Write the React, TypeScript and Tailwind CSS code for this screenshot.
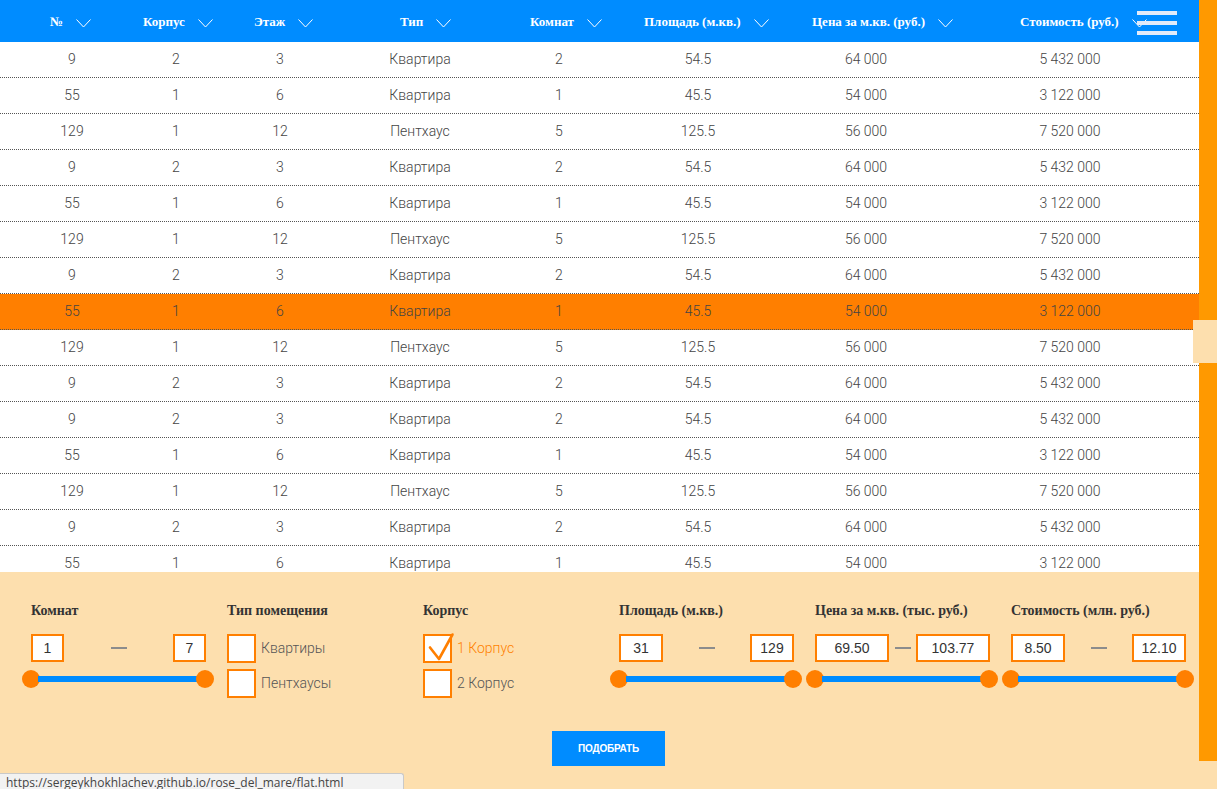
import React from "react";

type Flat = {
  num: number;
  building: number;
  floor: number;
  type: string;
  rooms: number;
  area: string;
  price: string;
  cost: string;
};

const flatA: Flat = { num: 9, building: 2, floor: 3, type: "Квартира", rooms: 2, area: "54.5", price: "64 000", cost: "5 432 000" };
const flatB: Flat = { num: 55, building: 1, floor: 6, type: "Квартира", rooms: 1, area: "45.5", price: "54 000", cost: "3 122 000" };
const flatC: Flat = { num: 129, building: 1, floor: 12, type: "Пентхаус", rooms: 5, area: "125.5", price: "56 000", cost: "7 520 000" };

const flats: Flat[] = [
  flatA, flatB, flatC, flatA, flatB, flatC, flatA, flatB,
  flatC, flatA, flatA, flatB, flatC, flatA, flatB,
];

const ACTIVE_ROW = 7;

const headers = [
  "№",
  "Корпус",
  "Этаж",
  "Тип",
  "Комнат",
  "Площадь (м.кв.)",
  "Цена за м.кв. (руб.)",
  "Стоимость (руб.)",
];

const Chevron = () => (
  <svg width="15" height="9" viewBox="0 0 15 9" className="translate-y-[2px]">
    <polyline points="0.5,0.5 7.5,8 14.5,0.5" fill="none" stroke="#ffffff" strokeWidth="1" />
  </svg>
);

const NumInput = ({ value, width }: { value: string; width: string }) => (
  <div
    className={`${width} h-[28px] border-2 border-[#ff7f00] bg-white flex items-center justify-center font-['Liberation_Sans',Arial,sans-serif] text-[14px] text-[#333]`}
  >
    {value}
  </div>
);

const RangeFilter = ({
  title,
  from,
  to,
  inputWidth,
}: {
  title: string;
  from: string;
  to: string;
  inputWidth: string;
}) => (
  <div className="w-[196px] flex flex-col">
    <div className="pl-[9px] h-[16px] leading-[16px] font-['Liberation_Serif',serif] font-bold text-[14px] text-[#333] whitespace-nowrap">
      {title}
    </div>
    <div className="mt-[15px] ml-[9px] w-[175px] flex items-center justify-between">
      <NumInput value={from} width={inputWidth} />
      <span className="w-[16px] h-[2px] bg-[#8c8c8c]" />
      <NumInput value={to} width={inputWidth} />
    </div>
    {/* Slider */}
    <div className="mt-[8px] w-[192px] h-[18px] flex items-center">
      <span className="w-[18px] h-[18px] rounded-full bg-[#ff7f00] shrink-0" />
      <span className="flex-1 h-[6px] bg-[#008cff] -mx-[2px]" />
      <span className="w-[18px] h-[18px] rounded-full bg-[#ff7f00] shrink-0 relative" />
    </div>
  </div>
);

const CheckFilter = ({
  title,
  options,
}: {
  title: string;
  options: { label: string; checked?: boolean }[];
}) => (
  <div className="w-[196px] flex flex-col pl-[9px]">
    <div className="h-[16px] leading-[16px] font-['Liberation_Serif',serif] font-bold text-[14px] text-[#333] whitespace-nowrap">
      {title}
    </div>
    <div className="mt-[15px] flex flex-col gap-[6px]">
      {options.map((o) => (
        <div key={o.label} className="flex items-center gap-[5px]">
          <div className="relative w-[29px] h-[29px] border-2 border-[#ff7f00] bg-white">
            {o.checked && (
              <svg
                width="32"
                height="32"
                viewBox="0 0 32 32"
                className="absolute -left-[2px] -top-[3px] overflow-visible"
              >
                <polyline
                  points="7,14.5 16,26 29.5,1.5"
                  fill="none"
                  stroke="#ff7f00"
                  strokeWidth="2.6"
                  strokeLinecap="round"
                  strokeLinejoin="round"
                />
              </svg>
            )}
          </div>
          <span
            className={`font-['Roboto',sans-serif] font-light text-[14px] ${
              o.checked ? "text-[#ff7f00]" : "text-[#555]"
            }`}
          >
            {o.label}
          </span>
        </div>
      ))}
    </div>
  </div>
);

export default function App() {
  return (
    <div className="relative w-[1217px] h-[789px] overflow-hidden bg-white flex flex-col">
      {/* Table header */}
      <div className="h-[42px] shrink-0 bg-[#008cff] grid grid-cols-[93px_111px_146px_130px_114px_168px_208px_1fr] pl-[50px] items-center">
        {headers.map((h) => (
          <div key={h} className="flex items-center gap-[13px]">
            <span className="font-['Liberation_Serif',serif] font-bold text-[13px] leading-none text-white whitespace-nowrap">
              {h}
            </span>
            <Chevron />
          </div>
        ))}
      </div>

      {/* Table body */}
      <div className="h-[530px] shrink-0 overflow-hidden">
        {flats.map((f, i) => (
          <div
            key={i}
            className={`h-[36px] grid grid-cols-[144px_64px_144px_136px_142px_136px_200px_208px_1fr] items-center text-center border-b border-dotted border-[#555] font-['Roboto',sans-serif] font-light text-[14px] text-[#444] ${
              i === ACTIVE_ROW ? "bg-[#ff7f00]" : "bg-white"
            }`}
          >
            <span>{f.num}</span>
            <span>{f.building}</span>
            <span>{f.floor}</span>
            <span>{f.type}</span>
            <span>{f.rooms}</span>
            <span>{f.area}</span>
            <span>{f.price}</span>
            <span>{f.cost}</span>
            <span />
          </div>
        ))}
      </div>

      {/* Filters */}
      <div className="flex-1 bg-[#fddfae] flex flex-col">
        <div className="flex pl-[22px] pt-[31px]">
          <RangeFilter title="Комнат" from="1" to="7" inputWidth="w-[33px]" />
          <CheckFilter
            title="Тип помещения"
            options={[{ label: "Квартиры" }, { label: "Пентхаусы" }]}
          />
          <CheckFilter
            title="Корпус"
            options={[{ label: "1 Корпус", checked: true }, { label: "2 Корпус" }]}
          />
          <RangeFilter title="Площадь (м.кв.)" from="31" to="129" inputWidth="w-[44px]" />
          <RangeFilter title="Цена за м.кв. (тыс. руб.)" from="69.50" to="103.77" inputWidth="w-[74px]" />
          <RangeFilter title="Стоимость (млн. руб.)" from="8.50" to="12.10" inputWidth="w-[54px]" />
        </div>
        <div className="flex justify-center mt-[33px]">
          <button className="w-[113px] h-[35px] bg-[#008cff] text-white font-['Liberation_Sans',Arial,sans-serif] font-bold text-[10px] tracking-[-0.2px]">
            ПОДОБРАТЬ
          </button>
        </div>
      </div>

      {/* Menu button */}
      <div className="absolute left-[1137px] top-[11px] w-[40px] flex flex-col gap-[6px]">
        <span className="h-[4px] bg-[#e3ebf9]" />
        <span className="h-[4px] bg-[#e3ebf9]" />
        <span className="h-[4px] bg-[#e3ebf9]" />
      </div>

      {/* Scrollbar */}
      <div className="absolute right-0 top-0 w-[18px] h-[761px] bg-[#ff9900]" />
      <div className="absolute left-[1193px] top-[320px] w-[24px] h-[43px] bg-[#fddfae]" />

      {/* Status bar */}
      <div className="absolute left-0 top-[773px] w-[404px] h-[20px] bg-[#f2f2f2] border-t border-r border-[#c9c9c9] rounded-tr-[3px] pl-[6px] pt-[2px] font-['Open_Sans',sans-serif] text-[12px] leading-[14px] text-[#444] whitespace-nowrap">
        https://sergeykhokhlachev.github.io/rose_del_mare/flat.html
      </div>
    </div>
  );
}
